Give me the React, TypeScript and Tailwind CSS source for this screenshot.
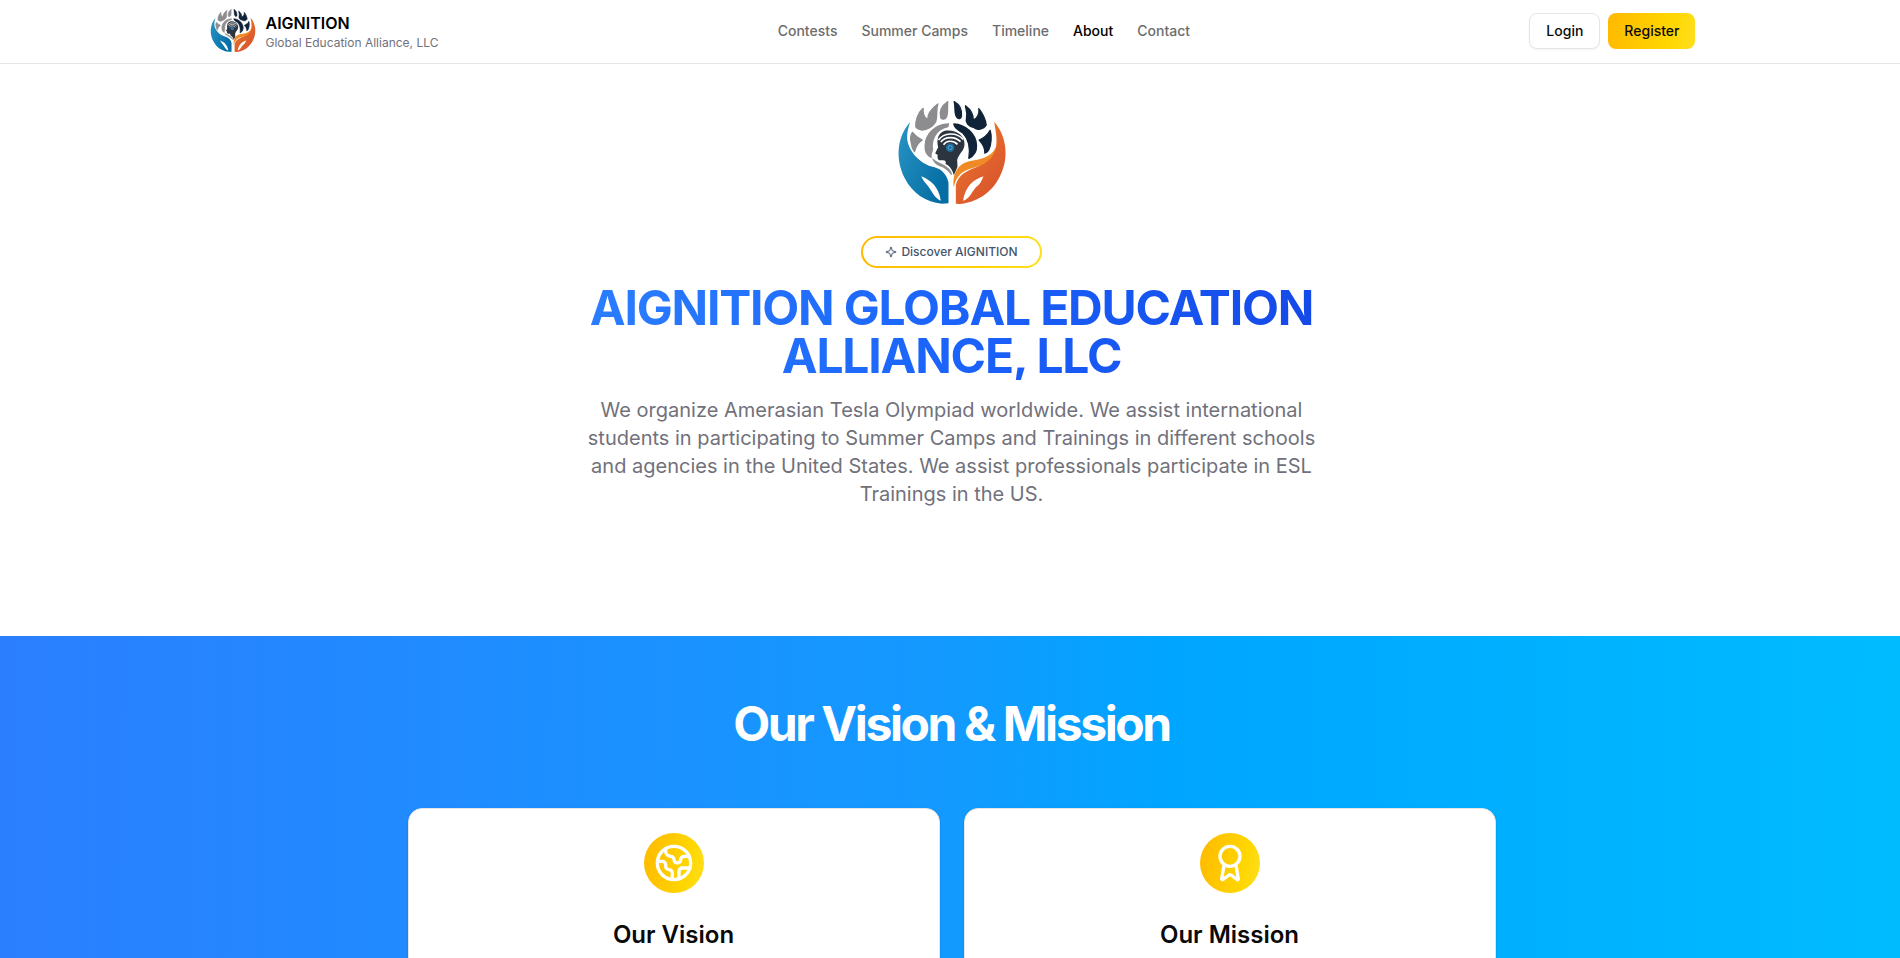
import { Award, Earth, Sparkle } from "lucide-react";

function Logo({ className }: { className: string }) {
  return (
    <svg viewBox="34.5 33 360 360" className={className} aria-hidden="true">
      <defs>
        <linearGradient id="lb" x1="0" y1="0" x2="1" y2="0.6">
          <stop offset="0" stopColor="#2a93c4" />
          <stop offset="1" stopColor="#046ea4" />
        </linearGradient>
        <linearGradient id="lo" x1="0" y1="0" x2="0.7" y2="1">
          <stop offset="0" stopColor="#f39a2c" />
          <stop offset="0.5" stopColor="#e2672d" />
          <stop offset="1" stopColor="#d9532b" />
        </linearGradient>
      </defs>
      <g fill="#8d8c8f" stroke="#8d8c8f" strokeWidth="4" strokeLinejoin="round">
        <path d="M93 176C88 160 90 150 96 142C103 151 113 160 125 165C112 174 105 187 102 200C97 194 94 188 93 176Z" />
        <path d="M106 126C104 108 112 84 128 70C126 84 130 96 142 105C141 88 151 72 172 57C166 76 171 94 166 109C160 120 151 127 141 131C128 138 112 136 106 126Z" />
        <path d="M181 99C176 80 184 62 202 50C199 65 204 81 198 96C192 104 186 104 181 99Z" />
        <path d="M204 117C166 118 134 146 134 182C133 198 140 211 152 217C150 208 153 200 156 194C151 165 165 133 202 125Z" />
        <path d="M156 221C169 233 190 237 202 249C210 256 214 263 213 270C206 260 197 251 185 245C170 241 161 234 156 221Z" strokeWidth="2" />
      </g>
      <g fill="#102338" stroke="#102338" strokeWidth="4" strokeLinejoin="round">
        <path d="M221 50C236 58 244 75 243 92C242 103 235 103 229 97C220 86 226 68 221 50Z" />
        <path d="M255 62C270 73 279 88 278 105C290 102 298 85 295 71C307 86 315 102 317 120C309 134 290 136 281 128C262 124 254 112 258 99C262 85 256 74 255 62Z" />
        <path d="M329 136C334 152 333 178 324 196C321 200 318 203 313 204C314 190 307 177 296 165C311 159 322 149 329 136Z" />
        <path d="M220 117C255 119 287 146 288 181C289 198 280 213 265 220C269 194 266 163 247 144C234 135 222 132 220 117Z" />
      </g>
      <path
        d="M193 137C225 132 252 150 252 177C252 198 235 205 230 225L231 245L220 271C215 252 207 242 195 237C198 228 194 224 181 226C173 227 169 219 172 210L164 205L173 187C167 163 174 143 193 137Z"
        fill="#2c343f"
      />
      <g fill="none" stroke="#fff" strokeWidth="5">
        <path d="M174 165C190 142 228 141 248 163" />
        <path d="M181 171C194 154 223 153 240 170" />
        <path d="M189 179C198 166 218 165 231 178" />
      </g>
      <circle cx="209" cy="188" r="13" fill="#1e6b98" />
      <circle cx="209" cy="188" r="6" fill="none" stroke="#4ea9d5" strokeWidth="3" />
      <path
        d="M89 112C49 154 44 224 72 278C96 326 137 351 184 356L204 355L204 293C199 269 184 253 162 247C117 237 84 198 80 162C79 143 83 128 89 112ZM122 274C151 286 174 304 181 347C164 342 154 319 143 304C136 295 127 286 122 274Z"
        fill="url(#lb)"
        fillRule="evenodd"
      />
      <path
        d="M341 110C379 153 386 219 359 272C334 325 287 352 238 357L226 356L226 300C233 274 248 264 273 252C315 239 339 216 347 183C351 157 344 132 341 110ZM309 274C281 284 256 300 248 347C265 344 272 324 286 307C297 300 304 288 309 274Z"
        fill="url(#lo)"
        fillRule="evenodd"
      />
      <path d="M220 307C214 264 234 235 270 228C302 222 332 218 346 187C339 224 313 240 277 249C243 257 226 276 220 307Z" fill="#f08a26" />
    </svg>
  );
}

const links = ["Contests", "Summer Camps", "Timeline", "About", "Contact"];

export default function App() {
  return (
    <div className="h-[958px] w-full overflow-hidden bg-white font-['Inter',sans-serif] text-[#0a0a0a]">
      <div className="w-[1903px]">
        <header className="h-16 border-b border-[#e5e5e5]">
          <div className="mx-auto flex h-[62px] max-w-[1536px] items-center justify-between px-6">
            <div className="flex items-center gap-2">
              <Logo className="mt-0.5 size-[50px]" />
              <div className="flex flex-col pt-[3px]">
                <span className="text-base leading-5 font-semibold text-black">AIGNITION</span>
                <span className="text-xs leading-[19px] text-[#71717b]">Global Education Alliance, LLC</span>
              </div>
            </div>
            <nav className="flex items-center gap-6 text-sm font-medium">
              {links.map((l) => (
                <a key={l} className={l === "About" ? "text-black" : "text-[#6c6c6c]"}>
                  {l}
                </a>
              ))}
            </nav>
            <div className="flex items-center gap-2 text-sm font-medium">
              <button className="h-9 rounded-lg border border-[#e5e5e5] bg-white px-4 shadow-xs">Login</button>
              <button className="h-9 rounded-lg bg-linear-[100deg] from-[#ffb900] via-[#ffd600] via-70% to-[#ffdf20] px-4">
                Register
              </button>
            </div>
          </div>
        </header>

        <section className="flex h-[572px] flex-col items-center pt-8">
          <Logo className="size-[120px]" />
          <div className="mt-5 rounded-full bg-linear-[100deg] from-[#ffb900] via-[#ffd600] via-70% to-[#ffdf20] p-0.5">
            <div className="flex h-7 items-center gap-1 rounded-full bg-white px-[22px] text-xs font-medium text-[#45556c]">
              <Sparkle size={12} />
              Discover AIGNITION
            </div>
          </div>
          <h1 className="mt-4 w-[768px] bg-linear-[100deg] from-[#2b7fff] via-[#1b63fa] to-[#1447e6] bg-clip-text text-center text-5xl leading-[48px] font-bold tracking-tight text-transparent">
            AIGNITION GLOBAL EDUCATION ALLIANCE, LLC
          </h1>
          <p className="mt-4 w-[736px] text-center text-xl leading-7 text-[#71717b]">
            We organize Amerasian Tesla Olympiad worldwide. We assist international students in participating to Summer
            Camps and Trainings in different schools and agencies in the United States. We assist professionals
            participate in ESL Trainings in the US.
          </p>
        </section>

        <section className="h-[700px] bg-[linear-gradient(90.5deg,#2b7fff_0%,#139aff_50%,#00a5ff_61%,#00bcff_100%)] pt-16">
          <h2 className="text-center text-5xl leading-[48px] font-bold tracking-tighter text-white">
            Our Vision &amp; Mission
          </h2>
          <div className="mx-auto mt-[60px] grid max-w-[1088px] grid-cols-2 gap-6">
            {[
              { title: "Our Vision", Icon: Earth },
              { title: "Our Mission", Icon: Award },
            ].map(({ title, Icon }) => (
              <div
                key={title}
                className="flex h-[420px] flex-col items-center rounded-[14px] border border-[#e5e5e5] bg-white pt-6 shadow-sm"
              >
                <div className="flex size-15 items-center justify-center rounded-full bg-linear-[100deg] from-[#ffb900] via-[#ffd600] via-70% to-[#ffdf20] text-white">
                  <Icon size={40} />
                </div>
                <h3 className="mt-[26px] text-2xl leading-8 font-semibold">{title}</h3>
              </div>
            ))}
          </div>
        </section>
      </div>
    </div>
  );
}
